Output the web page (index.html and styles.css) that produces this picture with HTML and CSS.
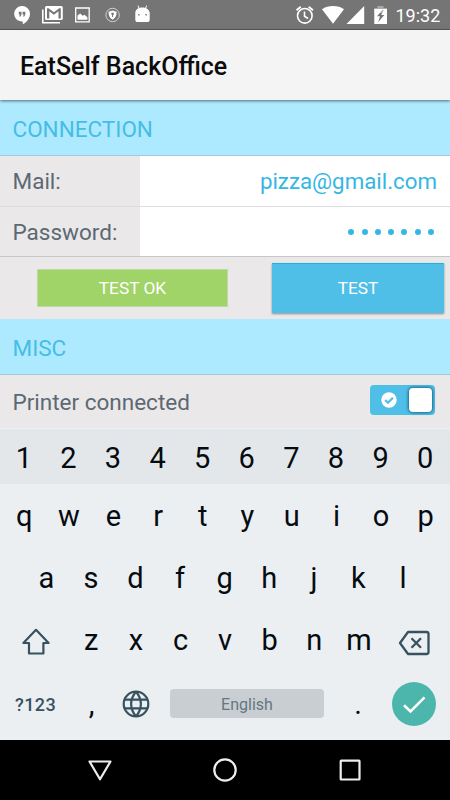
FILE: index.html
```html
<!DOCTYPE html>
<html lang="en">
<head>
<meta charset="utf-8">
<title>EatSelf BackOffice</title>
<link rel="stylesheet" href="styles.css">
</head>
<body>
<div class="screen">
  <header class="status">
    <svg class="status-icons" width="155" height="29" viewBox="0 0 155 29">
      <path fill="#fff" fill-rule="evenodd" d="M22 6a7.8 7.8 0 0 0-7.8 7.8c0 4.400 3.400 7.700 7.800 7.700h.8V24.300c4-2 7.200-6 7.200-10.500A7.800 7.800 0 0 0 22 6zM18.800 11.800h2.700v2.700l-1 2h-1.300l.8-1.900h-1.200zM22.600 11.800h2.700v2.700l-1 2H23l.8-1.900h-1.200z"/>
      <path fill="#fff" fill-rule="evenodd" d="M46.500 6h14.800a1.500 1.500 0 0 1 1.500 1.500v11a1.500 1.500 0 0 1-1.500 1.500H46.500a1.500 1.500 0 0 1-1.500-1.500v-11A1.500 1.500 0 0 1 46.500 6zM47 8.200V18.500h2.300V11.200l4.600 3.500 4.600-3.500v7.300h2.300V8.200h-1.600L53.900 12.300 48.600 8.200z"/>
      <path fill="none" stroke="#fff" stroke-width="1.600" d="M42.800 9.500v13.300H60"/>
      <path fill="none" stroke="#fff" stroke-width="1.300" d="M75.700 8h13.500v13.800H75.700z"/>
      <path fill="#fff" d="M77.500 19.800v-4.300l2.700-2 2.500 2.200 1.700-1 3 2.500v2.600z"/>
      <circle cx="112.600" cy="15" r="6.700" fill="none" stroke="#d0d0d0" stroke-width="1"/>
      <path fill="#fff" fill-rule="evenodd" d="M108.600 11.700l4-1.200 4 1.200c.2 3.500-1 6.200-4 8-3-1.800-4.200-4.500-4-8zM111.400 12.800v1.700l.7.500v2h1v-2l.7-.5v-1.700z"/>
      <path fill="#fff" d="M135.300 12.500c0-2 1.300-3.500 3.200-4.300l-1-2.500.8-.3 1.200 2.500c1.800-.4 3.800-.4 5.600 0l1.200-2.500.8.300-1 2.500c2 .8 3.200 2.300 3.500 4.300zM135.300 12.300h14.400v7.200a2.600 2.600 0 0 1-2.600 2.600h-9.200a2.600 2.600 0 0 1-2.600-2.600z"/>
      <path fill="#888" d="M138 14h1.600v1.500H138zM145.300 14h1.600v1.500h-1.600z"/>
    </svg>
    <div class="status-right">
      <svg width="94" height="29" viewBox="294 0 94 29">
        <g fill="none" stroke="#fff" stroke-width="1.600">
          <circle cx="304.800" cy="15.800" r="7.300"/>
          <path d="M304.500 11.500v4.800l3.600 2.200"/>
          <path stroke-width="1.900" d="M296.500 10.200l4.300-3.500M313 10.200l-4.300-3.500"/>
        </g>
        <path fill="#fff" d="M322 9.200c6-4.200 16-4.200 22 0L333 23.800zM364.200 6v18h-17.700z"/>
        <path fill="#aaa" d="M377.500 6h6v2h3.500v5h-12.700V8h3.200z"/>
        <path fill="#fff" fill-rule="evenodd" d="M374.300 9h12.700v15h-12.700zM382.500 10l-5.500 6.300h3l-1.700 5.700 6-7h-3.200l2.700-5z"/>
      </svg>
      <span class="clock">19:32</span>
    </div>
  </header>
  <div class="appbar"><h1>EatSelf BackOffice</h1></div>
  <main>
    <h2 class="section">CONNECTION</h2>
    <div class="field"><label class="mail-label">Mail:</label><div class="value">pizza@gmail.com</div></div>
    <div class="field last"><label class="pass-label">Password:</label>
      <div class="value dots"><i></i><i></i><i></i><i></i><i></i><i></i><i></i></div></div>
    <div class="actions"><div class="result">TEST OK</div><button class="test">TEST</button></div>
    <h2 class="section misc">MISC</h2>
    <div class="printer"><span>Printer connected</span>
      <div class="switch">
        <svg width="16" height="16" viewBox="0 0 16 16"><circle cx="8" cy="8" r="7.700" fill="#fff"/><path d="M4.200 8l2.700 2.700 5-5" fill="none" stroke="#4fbfe8" stroke-width="2.300"/></svg>
        <div class="knob"></div>
      </div>
    </div>
  </main>
  <section class="keyboard">
    <div class="keys numbers"><span>1</span><span>2</span><span>3</span><span>4</span><span>5</span><span>6</span><span>7</span><span>8</span><span>9</span><span>0</span></div>
    <div class="keys top"><span>q</span><span>w</span><span>e</span><span>r</span><span>t</span><span>y</span><span>u</span><span>i</span><span>o</span><span>p</span></div>
    <div class="keys home"><span>a</span><span>s</span><span>d</span><span>f</span><span>g</span><span>h</span><span>j</span><span>k</span><span>l</span></div>
    <div class="keys lower">
      <svg class="shift" width="30" height="28" viewBox="0 0 30 28"><path d="M15 1.800L27.600 15h-5.200v10.500H8V15H2.400z" fill="none" stroke="#37525f" stroke-width="2.200" stroke-linejoin="round"/></svg>
      <span>z</span><span>x</span><span>c</span><span>v</span><span>b</span><span>n</span><span>m</span>
      <svg class="erase" width="34" height="26" viewBox="0 0 34 26"><path d="M10 2h18.500a2 2 0 0 1 2 2v18a2 2 0 0 1-2 2H10L2 13z M13.500 8.300l9.500 9.500M23 8.300L13.500 17.800" fill="none" stroke="#37525f" stroke-width="2.300" stroke-linejoin="round"/></svg>
    </div>
    <div class="bottom">
      <span class="symbols">?123</span>
      <span class="comma">,</span>
      <svg class="globe" width="28" height="28" viewBox="0 0 28 28"><g fill="none" stroke="#37525f" stroke-width="2.200"><circle cx="14" cy="14" r="12.300"/><path d="M2.500 9.700h23M2.500 18.300h23M14 1.700c-6.500 7.500-6.500 17 0 24.600M14 1.700c6.500 7.500 6.500 17 0 24.600"/></g></svg>
      <span class="space">English</span>
      <span class="period">.</span>
      <span class="enter"><svg width="44" height="44" viewBox="0 0 44 44"><path d="M12 23.300l6.500 6.200L32.500 15.300" fill="none" stroke="#fff" stroke-width="2.600"/></svg></span>
    </div>
  </section>
  <nav>
    <svg width="26" height="26" viewBox="0 0 26 26"><path d="M2.500 4.500h21L13 22.300z"/></svg>
    <svg width="26" height="26" viewBox="0 0 26 26"><circle cx="13" cy="13" r="10.700"/></svg>
    <svg width="26" height="26" viewBox="0 0 26 26"><rect x="3.700" y="3.700" width="18.800" height="18.800" rx=".5"/></svg>
  </nav>
</div>
</body>
</html>
```
FILE: styles.css
```css
* { box-sizing: border-box; }
body { margin: 0; font-family: Roboto, "Liberation Sans", sans-serif; }
svg { display: block; flex: none; }
h1, h2 { margin: 0; font-weight: 400; }

.screen { width: 450px; height: 800px; display: flex; flex-direction: column; overflow: hidden; }

.status { height: 30px; background: #757575; border-bottom: 1px solid #5c5c5c; display: flex; justify-content: space-between; }
.status-right { display: flex; width: 156px; }
.clock { color: #fff; font-size: 18px; line-height: 32px; margin-left: 7.500px; }

.appbar { height: 70px; background: #f4f4f4; padding-left: 20px; z-index: 1; box-shadow: 0 1px 3px rgba(0, 0, 0, .55); }
.appbar h1 { font-size: 25px; font-weight: 500; line-height: 73px; color: #0c0c0c; white-space: nowrap; }

main { height: 328px; background: #eae8e9; }
.section { height: 56px; background: #aeeaff; border-bottom: 1px solid #9fcbd9; padding-left: 12.500px; font-size: 22.500px; line-height: 58px; color: #45bde6; }
.misc { line-height: 58px; }
.field { height: 51px; display: flex; border-bottom: 1px solid #dedcde; font-size: 22.500px; }
.field.last { height: 50px; border-bottom: 1px solid #c7c7c7; }
.field label { width: 139.500px; padding-left: 12.500px; line-height: 51px; color: #5c6872; }
.value { flex: 1; background: #fff; text-align: right; padding-right: 13px; font-size: 22.300px; line-height: 51px; color: #35b7e3; }
.dots { display: flex; align-items: center; justify-content: flex-end; gap: 7.300px; padding-right: 16px; }
.dots i { width: 6px; height: 6px; border-radius: 50%; background: #35b7e3; }

.actions { height: 62px; display: flex; align-items: flex-start; }
.result { width: 191px; height: 38px; margin: 12px 44px 0 37px; background: #a0d468; border: 1px solid #bdd99f; color: #fff; font-size: 17.300px; line-height: 37px; text-align: center; }
.test { width: 172px; height: 50px; margin-top: 6px; padding: 0 0 1px; border: 0; border-top: 1px solid #20b4df; background: #4fbfe8; color: #fff; font: 17.300px Roboto, sans-serif; box-shadow: 0 1px 2px rgba(0, 0, 0, .4); }
.printer { height: 53px; display: flex; justify-content: space-between; padding: 0 15px 0 12.500px; font-size: 22.500px; line-height: 55px; color: #5c6872; }
.switch { width: 65px; height: 30px; margin-top: 10px; border-radius: 4px; background: #4fbfe8; display: flex; align-items: center; justify-content: space-between; padding: 0 3px 0 11px; }
.knob { width: 23px; height: 24px; border-radius: 4px; background: #fff; box-shadow: 0 0 3px 1px rgba(0, 70, 100, .7); }

.keyboard { height: 312px; background: #ebeff2; border-top: 1px solid #f0f1f2; color: #050b10; font-size: 29px; }
.keys { display: flex; padding: 0 2px 0 1.500px; }
.keys span { width: 44.600px; flex: none; text-align: center; }
.numbers { height: 55px; line-height: 58px; background: #e3e7ea; }
.top { height: 62px; line-height: 64px; padding-left: 2px; }
.home { height: 63px; line-height: 65px; padding-left: 24px; }
.lower { height: 63px; line-height: 67px; align-items: center; padding-left: 21px; }
.shift { margin: 3px 18px 0 0; }
.erase { margin: 5px 0 0 16.500px; }
.bottom { height: 64px; display: flex; align-items: center; padding: 0 14px 1px 15px; }
.symbols { width: 61px; font-size: 18px; font-weight: 500; letter-spacing: .4px; padding-top: 1px; color: #37525f; }
.comma { width: 31px; text-align: center; }
.globe { margin: 0 20.500px 0 14.500px; }
.space { width: 154px; height: 29px; border-radius: 4px; background: #c8ced1; color: #637780; font-size: 16px; line-height: 31px; text-align: center; }
.period { width: 68px; text-align: center; }
.enter { width: 44px; height: 44px; border-radius: 50%; background: #4db6ac; }

nav { height: 60px; background: #000; display: flex; align-items: center; justify-content: space-between; padding: 0 87px; }
nav svg { fill: none; stroke: #eee; stroke-width: 2.200; stroke-linejoin: round; }
```
